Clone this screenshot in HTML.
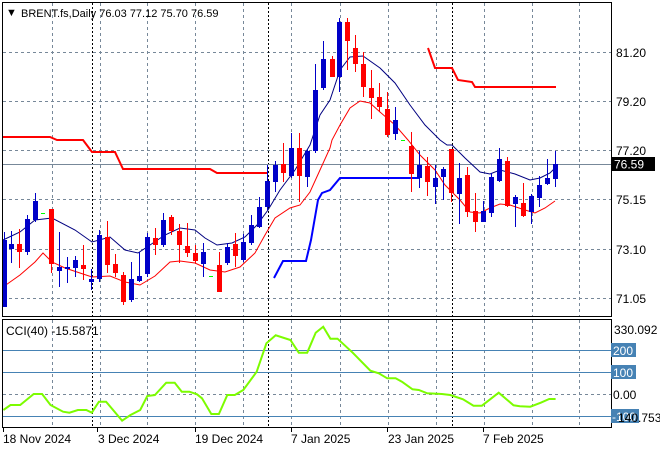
<!DOCTYPE html>
<html><head><meta charset="utf-8"><style>
html,body{margin:0;padding:0;background:#fff;}
svg{display:block;font-family:"Liberation Sans",sans-serif;}
</style></head><body>
<svg id="s" width="660" height="450" viewBox="0 0 660 450" xmlns="http://www.w3.org/2000/svg">
<rect width="660" height="450" fill="#fff"/>
<g id="grid" stroke="#778899" stroke-width="1" stroke-dasharray="3,3"></g>
<g stroke="#000" stroke-dasharray="2,2" stroke-width="1">
<line x1="92.5" y1="3" x2="92.5" y2="316"/><line x1="268.5" y1="3" x2="268.5" y2="316"/><line x1="452.5" y1="3" x2="452.5" y2="316"/>
<line x1="92.5" y1="320" x2="92.5" y2="427"/><line x1="268.5" y1="320" x2="268.5" y2="427"/><line x1="452.5" y1="320" x2="452.5" y2="427"/>
</g>
<line x1="3" y1="164.5" x2="611" y2="164.5" stroke="#778899"/>
<g stroke="#4682B4" stroke-width="1">
<line x1="3" y1="350.5" x2="611" y2="350.5"/><line x1="3" y1="372.5" x2="611" y2="372.5"/><line x1="3" y1="416.5" x2="611" y2="416.5"/>
</g>
<line x1="3" y1="394.5" x2="611" y2="394.5" stroke="#778899" stroke-dasharray="3,3"/>
<polyline fill="none" stroke="#ff0000" stroke-width="2" points="3,137 50,137 57,140 83,140 92,152 115,152 123,169 210,169 217,173 267,173"/>
<polyline fill="none" stroke="#ff0000" stroke-width="2" points="428,48 435,68 452,68 458,80 472,82 475,87 556,87"/>
<polyline fill="none" stroke="#0000ff" stroke-width="2" points="274,278 283,261 306,261 311,240 318,200 322,193 330,190 340,178 419,178"/>
<polyline fill="none" stroke="#000080" stroke-width="1" points="3,240 20,232 35,220 52,218 75,230 92,242 110,237 125,250 138,253 150,245 165,235 180,228 195,230 205,238 217,245 232,243 245,237 257,225 268,210 280,190 295,170 310,145 320,115 330,100 340,70 350,57 363,56 380,68 395,83 410,105 425,125 440,140 447,145 452,145 465,158 480,172 490,174 500,170 515,174 530,180 540,178 550,173 555,168"/>
<polyline fill="none" stroke="#ff0000" stroke-width="1" points="3,287 20,275 35,262 43,253 52,262 65,268 80,273 92,277 110,276 125,282 140,285 155,276 170,262 180,261 195,263 210,270 225,272 240,267 255,253 265,235 275,218 290,208 300,205 310,192 320,170 330,148 332,140 340,125 350,108 360,101 370,103 380,112 395,125 408,140 420,155 435,170 445,185 460,200 470,212 480,213 490,208 500,204 510,205 525,210 535,213 545,208 555,201"/>
<g stroke="#00ff00" stroke-width="1"><line x1="41" y1="213.5" x2="45" y2="213.5"/><line x1="209" y1="276.5" x2="213" y2="276.5"/><line x1="401" y1="140.5" x2="405" y2="140.5"/></g>
<g id="candles"></g>
<polyline id="cci" fill="none" stroke="#7cfc00" stroke-width="2"/>
<g fill="none" stroke="#000" stroke-width="1">
<rect x="2.5" y="2.5" width="609" height="314"/>
<rect x="2.5" y="319.5" width="609" height="108"/>
</g>
<text x="6" y="16" font-size="11" fill="#000">&#9660;</text>
<text x="21" y="17" font-size="11" fill="#000">BRENT.fs,Daily  76.03 77.12 75.70 76.59</text>
<text x="6" y="335" font-size="12" fill="#000">CCI(40) -15.5871</text>
<g font-size="12" fill="#000">
<text x="616" y="57">81.20</text><text x="616" y="106">79.20</text><text x="616" y="155">77.20</text>
<text x="616" y="204">75.15</text><text x="616" y="254">73.10</text><text x="616" y="303">71.05</text>
</g>
<rect x="611" y="157" width="44" height="14" fill="#000"/>
<text x="614" y="168.5" font-size="12" fill="#fff">76.59</text>
<text x="614" y="334" font-size="12" fill="#000">330.092</text>
<rect x="611" y="343" width="25" height="14" fill="#4682B4"/><text x="613" y="355" font-size="12" fill="#fff">200</text>
<rect x="611" y="365" width="25" height="14" fill="#4682B4"/><text x="613" y="377" font-size="12" fill="#fff">100</text>
<text x="613" y="399" font-size="12" fill="#000">0.00</text>
<rect x="611" y="409" width="28" height="14" fill="#4682B4"/><text x="612" y="421" font-size="12" fill="#fff">-100</text>
<text x="618" y="422" font-size="12" fill="#000">140.753</text>
<g stroke="#000"><line x1="3.5" y1="428" x2="3.5" y2="432"/><line x1="97.5" y1="428" x2="97.5" y2="432"/><line x1="195.5" y1="428" x2="195.5" y2="432"/><line x1="291.5" y1="428" x2="291.5" y2="432"/><line x1="387.5" y1="428" x2="387.5" y2="432"/><line x1="483.5" y1="428" x2="483.5" y2="432"/></g>
<g font-size="12" fill="#000">
<text x="3" y="443">18 Nov 2024</text><text x="98" y="443">3 Dec 2024</text><text x="195" y="443">19 Dec 2024</text>
<text x="291" y="443">7 Jan 2025</text><text x="388" y="443">23 Jan 2025</text><text x="483" y="443">7 Feb 2025</text>
</g>
</svg>
<script>
var NS="http://www.w3.org/2000/svg",g=document.getElementById('grid');
function ln(p,x1,y1,x2,y2){var l=document.createElementNS(NS,'line');l.setAttribute('x1',x1);l.setAttribute('y1',y1);l.setAttribute('x2',x2);l.setAttribute('y2',y2);p.appendChild(l);}
[52,100,147,195,243,291,340,388,436,484,532,579].forEach(function(x){ln(g,x+.5,3,x+.5,316);ln(g,x+.5,320,x+.5,427);});
[52,101,150,199,249,298].forEach(function(y){ln(g,3,y+.5,611,y+.5);});
var C=[[4,'b',240,307,232,307],[11,'b',244,249,231,263],[19,'r',244,252,229,268],[27,'b',219,252,215,255],[35,'b',201,220,193,222],
[51,'r',209,264,209,273],[59,'b',267,271,232,287],[67,'b',267,269,257,283],[75,'b',260,268,256,277],[83,'r',265,269,245,280],
[91,'b',279,282,269,290],[99,'b',235,279,230,282],[107,'r',237,265,221,273],[115,'r',264,273,254,277],[123,'r',275,302,272,305],
[131,'b',279,300,262,302],[139,'b',276,281,252,282],[147,'b',237,274,233,277],[155,'r',238,245,228,255],[163,'b',220,245,213,247],
[171,'r',217,231,215,235],[179,'r',231,245,224,263],[187,'r',246,253,223,257],[195,'r',253,261,245,263],[203,'b',252,264,243,277],
[219,'r',265,292,252,292],[227,'b',247,263,243,265],[235,'r',244,256,233,267],[243,'b',242,260,234,262],[251,'b',225,243,215,245],
[259,'b',207,227,197,228],[267,'b',181,207,165,210],[275,'b',165,182,161,192],[283,'r',164,173,143,182],[291,'b',148,176,133,178],
[299,'r',148,176,133,202],[307,'b',151,177,149,187],[315,'b',90,151,64,153],[323,'b',59,88,41,90],[332,'r',59,77,56,77],
[339,'b',22,77,18,92],[347,'r',22,41,18,70],[355,'r',48,64,35,72],[363,'r',64,87,52,97],[371,'r',88,98,70,119],
[379,'r',97,107,83,112],[387,'r',109,135,92,137],[395,'b',120,134,107,140],[411,'r',146,174,132,192],[419,'b',165,178,151,188],
[427,'r',166,182,157,196],[435,'b',178,187,165,204],[443,'b',169,177,167,200],[451,'r',149,193,149,202],[459,'b',178,194,163,224],
[467,'r',175,212,167,217],[475,'r',211,222,193,232],[483,'b',211,222,201,222],[491,'b',177,213,173,217],[499,'b',159,181,148,182],
[507,'r',161,206,157,207],[515,'b',197,204,195,227],[523,'r',203,216,183,217],[531,'b',196,212,194,224],[539,'b',185,198,176,207],
[547,'b',178,184,159,185],[555,'b',164,179,151,187]];
var cg=document.getElementById('candles');
C.forEach(function(c){var col=c[1]=='b'?'#0000c8':'#ff0000';
var w=document.createElementNS(NS,'line');w.setAttribute('x1',c[0]+.5);w.setAttribute('x2',c[0]+.5);w.setAttribute('y1',c[4]);w.setAttribute('y2',c[5]);w.setAttribute('stroke',col);cg.appendChild(w);
var r=document.createElementNS(NS,'rect');r.setAttribute('x',c[0]-2);r.setAttribute('y',c[2]);r.setAttribute('width',5);r.setAttribute('height',Math.max(2,c[3]-c[2]));r.setAttribute('fill',col);cg.appendChild(r);});
var Z=[[8,300],[25,285],[48,285],[80,252],[100,252],[120,285],[150,305],[165,308],[185,300],[205,300],[218,308],[235,275],[252,275],[290,332],[310,315],[333,300],[350,258],[368,255],[395,218],[415,218],[432,245],[450,245],[468,253],[480,265],[502,312],[520,312],[540,255],[558,255],[578,240],[610,185],[633,100],[655,76],[690,90],[710,128],[730,128],[750,68],[768,50],[785,86],[802,86],[838,128],[880,182],[900,190],[920,205],[940,205],[955,215],[980,238],[995,240],[1015,250],[1050,252],[1070,255],[1100,268],[1125,287],[1145,287],[1185,248],[1220,286],[1235,289],[1260,290],[1285,278],[1305,267],[1320,267]];
document.getElementById('cci').setAttribute('points',Z.map(function(p){return (p[0]/2.376).toFixed(1)+','+(310+p[1]/3).toFixed(1);}).join(' '));
</script>
</body></html>
